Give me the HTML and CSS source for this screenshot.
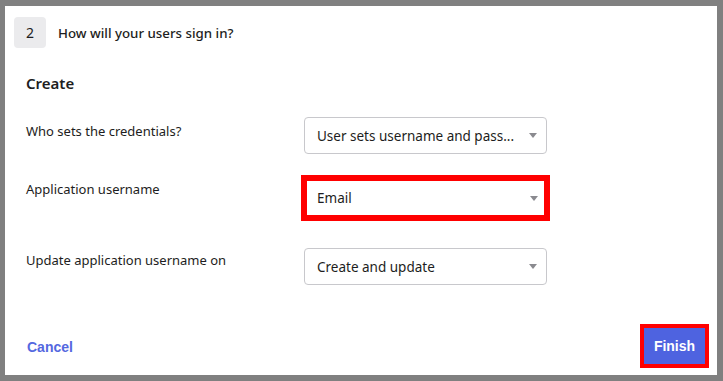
FILE: index.html
```html
<!DOCTYPE html>
<html>
<head>
<meta charset="utf-8">
<link rel="stylesheet" href="styles.css">
</head>
<body>
<div class="card">
  <div class="header">
    <div class="badge">2</div>
    <div class="header-title">How will your users sign in?</div>
  </div>
  <div class="section-title">Create</div>
  <div class="form">
    <div class="row row1">
      <div class="label">Who sets the credentials?</div>
      <div class="select"><span class="value">User sets username and pass...</span><span class="caret"></span></div>
    </div>
    <div class="row row2">
      <div class="label">Application username</div>
      <div class="select highlight"><span class="value">Email</span><span class="caret"></span></div>
    </div>
    <div class="row row3">
      <div class="label">Update application username on</div>
      <div class="select"><span class="value">Create and update</span><span class="caret"></span></div>
    </div>
  </div>
  <div class="footer">
    <a class="cancel">Cancel</a>
    <button class="finish">Finish</button>
  </div>
</div>
</body>
</html>
```
FILE: styles.css
```css
html, body {
  margin: 0;
  padding: 0;
  background: #808080;
}
body {
  width: 723px;
  height: 381px;
  overflow: hidden;
  font-family: "Noto Sans", "Open Sans", sans-serif;
  color: #1d1d21;
}
.card {
  margin: 6px 6px 6px 5px;
  height: 369px;
  background: #ffffff;
  display: flex;
  flex-direction: column;
  box-sizing: border-box;
}
.header {
  display: flex;
  align-items: center;
  padding: 11px 0 0 9px;
  gap: 12px;
}
.badge {
  width: 32px;
  height: 31px;
  background: #ebebed;
  border-radius: 4px;
  display: flex;
  align-items: center;
  justify-content: center;
  font-size: 14px;
}
.header-title {
  font-size: 13.3px;
  font-weight: 500;
}
.section-title {
  margin: 25px 0 0 21px;
  font-size: 15px;
  line-height: 20px;
  font-weight: 600;
}
.form {
  padding-left: 21px;
}
.row {
  display: grid;
  grid-template-columns: 278px 243px;
  align-items: start;
}
.row1 { margin-top: 24px; }
.row2 { margin-top: 21px; }
.row3 { margin-top: 27px; }
.label {
  font-size: 13px;
  line-height: 18px;
}
.row1 .label { padding-top: 5px; }
.row2 .label { padding-top: 5px; }
.row3 .label { padding-top: 3px; }
.select {
  box-sizing: border-box;
  width: 243px;
  height: 37px;
  border: 1px solid #c8c8cc;
  border-radius: 4px;
  display: flex;
  align-items: center;
  justify-content: space-between;
  padding: 0 9px 0 12px;
  font-size: 13.5px;
}
.select.highlight {
  width: 249px;
  height: 46px;
  margin-left: -3px;
  border: 6px solid #ff0000;
  border-radius: 0;
  padding: 0 6px 0 10px;
}
.caret {
  width: 0;
  height: 0;
  border-left: 4px solid transparent;
  border-right: 4px solid transparent;
  border-top: 5px solid #8a8a8f;
}
.footer {
  margin-top: auto;
  display: flex;
  align-items: center;
  justify-content: space-between;
  padding: 0 8px 7px 22px;
}
.cancel {
  font-family: "Liberation Sans", Arial, sans-serif;
  font-weight: bold;
  font-size: 14px;
  color: #5468e0;
  margin-top: 2px;
}
.finish {
  box-sizing: border-box;
  width: 69px;
  height: 44px;
  border: 4px solid #ff0000;
  background: #4e63e0;
  color: #ffffff;
  font-family: "Liberation Sans", Arial, sans-serif;
  font-weight: bold;
  font-size: 14px;
  padding: 0;
  margin: 0;
}
```
